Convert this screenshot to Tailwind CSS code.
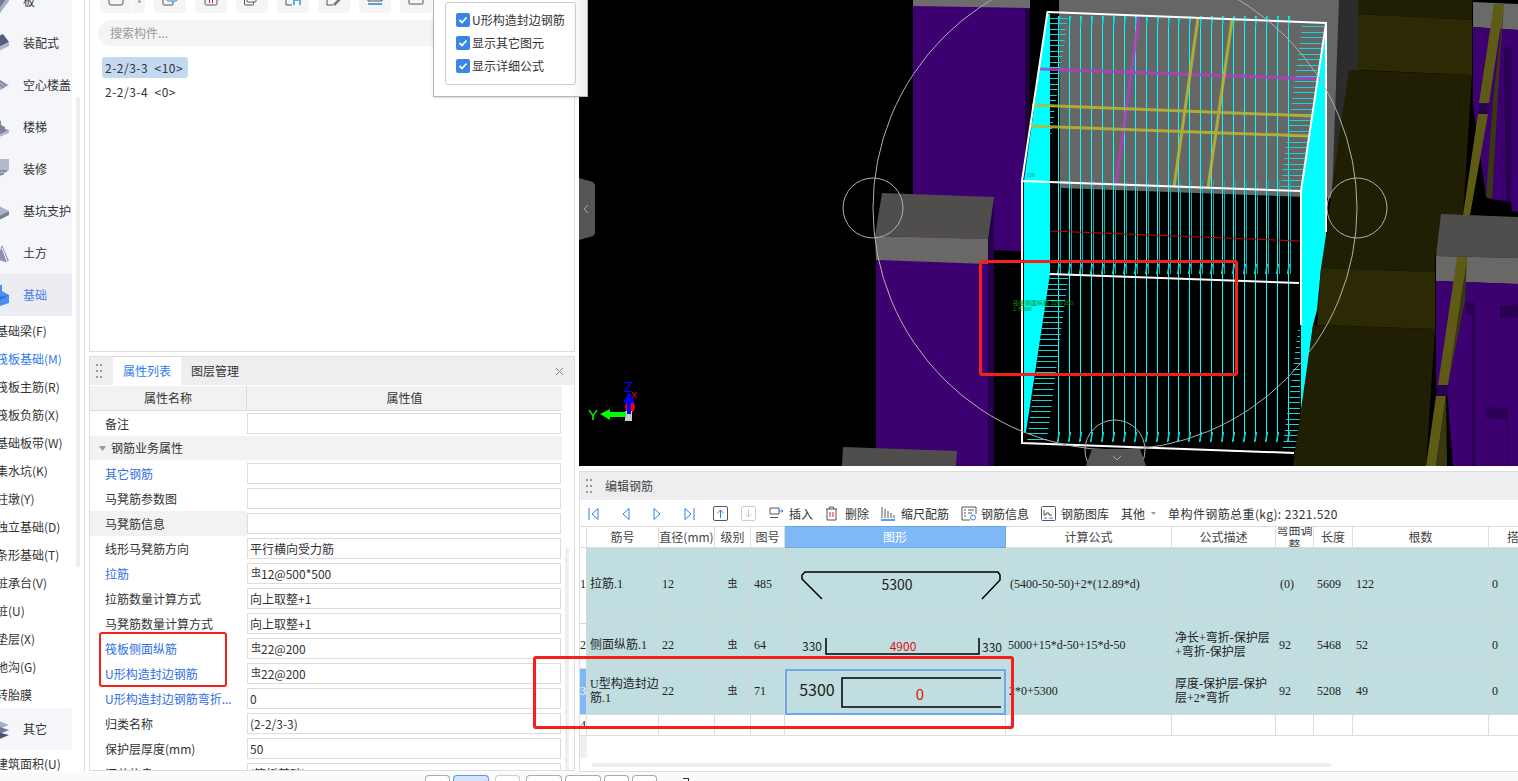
<!DOCTYPE html>
<html lang="zh-CN">
<head>
    <meta charset="UTF-8">
    <meta name="viewport" content="width=device-width, initial-scale=1.0">
    <title>编辑钢筋</title>
    <script src="https://cdn.jsdelivr.net/npm/@tailwindcss/browser@4"></script>
</head>
<body class="bg-white">
<div class="relative h-[781px] w-[1518px] overflow-hidden bg-white font-['Noto_Sans_CJK_SC',sans-serif] text-xs text-[#333]">
    <div class="flex h-[772px]">

        <!-- sidebar -->
        <aside class="relative h-[771px] w-[85px] shrink-0 overflow-hidden border-r border-[#ddd]">
            <div class="absolute left-[76px] top-[97px] h-[470px] w-1 rounded bg-[#eee]"></div>
            <div class="-mt-[20px] w-[72px]">
                <div class="flex h-[42px] items-center bg-[#f5f6fa]"><svg class="-ml-[15px] h-6 w-6" viewBox="0 0 24 24"><path d="M15 0 24 6 15 24Z" fill="#6f7a96"/><path d="M15 18 24 6V12L15 24Z" fill="#a9b0c4"/></svg><span class="ml-[14px]">板</span></div>
                <div class="flex h-[42px] items-center bg-[#f5f6fa]"><svg class="-ml-[15px] h-6 w-6" viewBox="0 0 24 24"><path d="M12 6 18 3 24 11 12 17Z" fill="#565f79"/><path d="M12 17 24 11V15L12 21Z" fill="#b0b6c8"/></svg><span class="ml-[14px]">装配式</span></div>
                <div class="flex h-[42px] items-center bg-[#f5f6fa]"><svg class="-ml-[15px] h-6 w-6" viewBox="0 0 24 24"><path d="M12 5 24 12 12 19Z" fill="#a6adc1"/><path d="M15 8 21 13M15 12 19 15" stroke="#5f6880"/></svg><span class="ml-[14px]">空心楼盖</span></div>
                <div class="flex h-[42px] items-center bg-[#f5f6fa]"><svg class="-ml-[15px] h-6 w-6" viewBox="0 0 24 24"><path d="M12 4 16 6V10L20 12V14L24 15 12 21Z" fill="#7a849e"/><path d="M12 21 24 15V18L12 23Z" fill="#b0b6c8"/></svg><span class="ml-[14px]">楼梯</span></div>
                <div class="flex h-[42px] items-center bg-[#f5f6fa]"><svg class="-ml-[15px] h-6 w-6" viewBox="0 0 24 24"><path d="M12 2H24V13L12 22Z" fill="#b4bacb"/><path d="M15 14H22M15 17H19" stroke="#5f6880"/></svg><span class="ml-[14px]">装修</span></div>
                <div class="flex h-[42px] items-center bg-[#f5f6fa]"><svg class="-ml-[15px] h-6 w-6" viewBox="0 0 24 24"><path d="M12 6 24 12 12 18Z" fill="#aab1c5"/><path d="M12 18 24 12V16L12 22Z" fill="#737d98"/></svg><span class="ml-[14px]">基坑支护</span></div>
                <div class="flex h-[42px] items-center bg-[#f5f6fa]"><svg class="-ml-[15px] h-6 w-6" viewBox="0 0 24 24"><path d="M12 18 17 4 24 20 20 21Z" fill="#8c94ab"/><path d="M17 7 22 20" stroke="#fff"/></svg><span class="ml-[14px]">土方</span></div>
                <div class="flex h-[42px] items-center bg-[#ecedf2]"><svg class="-ml-[15px] h-6 w-6" viewBox="0 0 24 24"><path d="M14 2h3v6l7 4v8l-9 3-4-4V10l3-2Z" fill="#4a90ee"/><path d="M15 14 24 12 15 17Z" fill="#2f6fcf"/></svg><span class="ml-[14px] text-[#4a7fe8]">基础</span></div>
            </div>
            <ul class="-ml-[4px] mt-px w-[90px]">
                <li class="flex h-7 items-center">基础梁(F)</li>
                <li class="flex h-7 items-center text-[#2f7dec]">筏板基础(M)</li>
                <li class="flex h-7 items-center">筏板主筋(R)</li>
                <li class="flex h-7 items-center">筏板负筋(X)</li>
                <li class="flex h-7 items-center">基础板带(W)</li>
                <li class="flex h-7 items-center">集水坑(K)</li>
                <li class="flex h-7 items-center">柱墩(Y)</li>
                <li class="flex h-7 items-center">独立基础(D)</li>
                <li class="flex h-7 items-center">条形基础(T)</li>
                <li class="flex h-7 items-center">桩承台(V)</li>
                <li class="flex h-7 items-center">桩(U)</li>
                <li class="flex h-7 items-center">垫层(X)</li>
                <li class="flex h-7 items-center">地沟(G)</li>
                <li class="flex h-7 items-center">转胎膜</li>
            </ul>
            <div class="-mt-px flex h-[42px] w-[72px] items-center bg-[#f5f6fa]"><svg class="-ml-[15px] h-6 w-6" viewBox="0 0 24 24"><path d="M12 3 24 8 12 13Z" fill="#a9b0c4"/><path d="M12 9 24 13 12 18Z" fill="#6f7a96"/><path d="M12 15 24 18 12 23Z" fill="#49536f"/></svg><span class="ml-[14px]">其它</span></div>
            <div class="-ml-[4px] flex h-7 items-center">建筑面积(U)</div>
        </aside>

        <!-- component + property panels -->
        <div class="ml-1 flex h-[771px] w-[486px] shrink-0 flex-col gap-[4px]">
            <section class="h-[352px] shrink-0 overflow-hidden border-x border-b border-[#ddd]">
                <div class="-mt-[17px] ml-[10px] flex gap-[9px]">
                    <div class="flex gap-px">
                        <div class="flex h-[30px] w-8 items-center justify-center rounded-l bg-[#f5f5f5]"><svg class="h-4 w-4" viewBox="0 0 16 16"><rect x="1" y="1" width="14" height="14" rx="2" fill="none" stroke="#555"/></svg></div>
                        <div class="flex h-[30px] w-3 items-end justify-center rounded-r bg-[#f5f5f5] pb-[10px]"><span class="h-[3px] w-[3px] rounded-full bg-[#aaa]"></span></div>
                    </div>
                    <div class="flex h-[30px] w-8 items-center justify-center rounded bg-[#f5f5f5]"><svg class="h-4 w-4" viewBox="0 0 16 16" fill="none"><rect x="1" y="4" width="10" height="11" rx="1" stroke="#555"/><rect x="5" y="1" width="10" height="10" rx="1" fill="#fff" stroke="#2f7dec"/></svg></div>
                    <div class="flex h-[30px] w-8 items-center justify-center rounded bg-[#f5f5f5]"><svg class="h-4 w-4" viewBox="0 0 16 16" fill="none"><rect x="2" y="2" width="12" height="13" rx="1.5" stroke="#555"/><path d="M6.5 9v4M9.500 9v4" stroke="#e02020"/></svg></div>
                    <div class="flex h-[30px] w-8 items-center justify-center rounded bg-[#f5f5f5]"><svg class="h-4 w-4" viewBox="0 0 16 16" fill="none"><rect x="0.500" y="6" width="9" height="9" rx="1" stroke="#555"/><rect x="3" y="4" width="9" height="8" rx="1" fill="#fff" stroke="#555"/><rect x="6" y="1" width="10" height="8" rx="1" fill="#fff" stroke="#2f7dec"/></svg></div>
                    <div class="flex h-[30px] w-8 items-center justify-center rounded bg-[#f5f5f5]"><svg class="h-4 w-4" viewBox="0 0 16 16" fill="none"><path d="M1 0V15H7" stroke="#555"/><rect x="8" y="8" width="8" height="7" fill="#6aa5f0"/><rect x="10" y="11" width="4" height="4" fill="#fff"/></svg></div>
                    <div class="flex h-[30px] w-8 items-center justify-center rounded bg-[#f5f5f5]"><svg class="h-4 w-4" viewBox="0 0 16 16" fill="none"><path d="M1 0V15H7" stroke="#555"/><path d="M8 15 15 8" stroke="#777" stroke-width="2.500"/></svg></div>
                    <div class="flex h-[30px] w-8 items-center justify-center rounded bg-[#f5f5f5]"><svg class="h-4 w-4" viewBox="0 0 16 16" fill="none"><path d="M1 0V11H15V0" stroke="#555"/><path d="M3 8H13" stroke="#555"/><path d="M1 14H15" stroke="#2f7dec" stroke-width="1.500"/></svg></div>
                    <div class="flex h-[30px] w-8 items-center justify-center rounded bg-[#f5f5f5]"><svg class="h-4 w-4" viewBox="0 0 16 16" fill="none"><rect x="1" y="1" width="14" height="13" rx="1" stroke="#555"/><path d="M3 7 6 10M6 7 3 10" stroke="#e02020"/><path d="M9 8.500H13" stroke="#555"/></svg></div>
                </div>
                <div class="ml-2 mt-[7px] flex h-[26px] w-[460px] items-center rounded-full bg-[#f4f4f4] pl-3 text-[#999]">搜索构件...</div>
                <div class="ml-3 mt-[11px] flex h-[21px] w-[86px] items-center rounded-[3px] bg-[#c3d9f1] pl-[3px] tracking-[0.5px]">2-2/3-3&nbsp;&nbsp;&lt;10&gt;</div>
                <div class="ml-3 mt-[3px] flex h-[21px] items-center pl-[3px] tracking-[0.5px]">2-2/3-4&nbsp;&nbsp;&lt;0&gt;</div>
            </section>

            <section class="relative min-h-0 flex-1 overflow-hidden border-x border-t border-b border-[#ddd]">
                <div class="flex h-7 items-center bg-[#eeeef0]">
                    <div class="ml-[6px] grid h-[14px] w-[6px] grid-cols-2 content-between gap-x-px">
                        <i class="h-[2px] w-[2px] bg-[#999]"></i><i class="h-[2px] w-[2px] bg-[#999]"></i><i class="h-[2px] w-[2px] bg-[#999]"></i><i class="h-[2px] w-[2px] bg-[#999]"></i><i class="h-[2px] w-[2px] bg-[#999]"></i><i class="h-[2px] w-[2px] bg-[#999]"></i>
                    </div>
                    <div class="ml-[11px] flex h-7 w-[68px] items-center justify-center bg-white text-[#2f7dec]">属性列表</div>
                    <div class="ml-[10px]">图层管理</div>
                    <svg class="ml-auto mr-[10px] h-[9px] w-[9px]" viewBox="0 0 9 9"><path d="M1 1 8 8M8 1 1 8" stroke="#888"/></svg>
                </div>
                <div class="absolute right-[5px] top-[191px] h-[230px] w-1 rounded bg-[#eee]"></div>
                <div class="mt-px w-[472px]">
                    <div class="flex h-[25px] border-b border-[#ddd] bg-[#f2f2f2]">
                        <div class="flex w-[157px] items-center justify-center border-r border-[#ddd]">属性名称</div>
                        <div class="flex flex-1 items-center justify-center">属性值</div>
                    </div>
                    <div class="flex h-[25px] items-center"><div class="w-[157px] pl-[15px]">备注</div><div class="flex h-[21px] w-[314px] items-center border border-[#ddd] pl-[2px]"></div></div>
                    <div class="flex h-[24px] items-center bg-[#f2f2f2] pl-[9px]"><svg class="h-[5px] w-[7px]" viewBox="0 0 7 5"><path d="M0 0H7L3.500 5Z" fill="#999"/></svg><span class="ml-[5px]">钢筋业务属性</span></div>
                    <div class="mt-px flex h-[25px] items-center"><div class="w-[157px] pl-[15px] text-[#2f6fe4]">其它钢筋</div><div class="flex h-[21px] w-[314px] items-center border border-[#ddd] pl-[2px]"></div></div>
                    <div class="flex h-[25px] items-center"><div class="w-[157px] pl-[15px]">马凳筋参数图</div><div class="flex h-[21px] w-[314px] items-center border border-[#ddd] pl-[2px]"></div></div>
                    <div class="flex h-[25px] items-center"><div class="flex h-[25px] w-[157px] items-center bg-[#f2f2f2] pl-[15px]">马凳筋信息</div><div class="flex h-[21px] w-[314px] items-center border border-[#ddd] pl-[2px]"></div></div>
                    <div class="flex h-[25px] items-center"><div class="w-[157px] pl-[15px]">线形马凳筋方向</div><div class="flex h-[21px] w-[314px] items-center border border-[#ddd] pl-[2px]">平行横向受力筋</div></div>
                    <div class="flex h-[25px] items-center"><div class="w-[157px] pl-[15px] text-[#2f6fe4]">拉筋</div><div class="flex h-[21px] w-[314px] items-center border border-[#ddd] pl-[3px]"><span class="-mt-[3px] text-[10px]">虫</span>12@500*500</div></div>
                    <div class="flex h-[25px] items-center"><div class="w-[157px] pl-[15px]">拉筋数量计算方式</div><div class="flex h-[21px] w-[314px] items-center border border-[#ddd] pl-[2px]">向上取整+1</div></div>
                    <div class="flex h-[25px] items-center"><div class="w-[157px] pl-[15px]">马凳筋数量计算方式</div><div class="flex h-[21px] w-[314px] items-center border border-[#ddd] pl-[2px]">向上取整+1</div></div>
                    <div class="flex h-[25px] items-center"><div class="w-[157px] pl-[15px] text-[#2f6fe4]">筏板侧面纵筋</div><div class="flex h-[21px] w-[314px] items-center border border-[#ddd] pl-[3px]"><span class="-mt-[3px] text-[10px]">虫</span>22@200</div></div>
                    <div class="flex h-[25px] items-center"><div class="w-[157px] pl-[15px] text-[#2f6fe4]">U形构造封边钢筋</div><div class="flex h-[21px] w-[314px] items-center border border-[#ddd] pl-[3px]"><span class="-mt-[3px] text-[10px]">虫</span>22@200</div></div>
                    <div class="flex h-[25px] items-center"><div class="w-[157px] whitespace-nowrap pl-[15px] text-[#2f6fe4]">U形构造封边钢筋弯折...</div><div class="flex h-[21px] w-[314px] items-center border border-[#ddd] pl-[2px]">0</div></div>
                    <div class="flex h-[25px] items-center"><div class="w-[157px] pl-[15px]">归类名称</div><div class="flex h-[21px] w-[314px] items-center border border-[#ddd] pl-[2px]">(2-2/3-3)</div></div>
                    <div class="flex h-[25px] items-center"><div class="w-[157px] pl-[15px]">保护层厚度(mm)</div><div class="flex h-[21px] w-[314px] items-center border border-[#ddd] pl-[2px]">50</div></div>
                    <div class="flex h-[25px] items-center"><div class="w-[157px] pl-[15px]">汇总信息</div><div class="flex h-[21px] w-[314px] items-center border border-[#ddd] pl-[2px]">(筏板基础)</div></div>
                </div>
            </section>
        </div>

        <!-- 3d view + rebar editor -->
        <main class="ml-1 flex w-[939px] shrink-0 flex-col">
            <div class="h-[466px] shrink-0 bg-black">
                <svg class="block" width="939" height="466" viewBox="579 0 939 466" font-family="Liberation Sans">
                    <!-- columns on the left -->
                    <polygon points="913,0 1030,0 1030,252 994,250 913,250" fill="#3d0070"/>
                    <polygon points="1025,9 1030,9 1030,252 1025,252" fill="#20003c"/>
                    <polygon points="913,0 1030,0 1030,8 913,6" fill="#6e6c6c"/>
                    <polygon points="876,260 988,263 988,466 876,466" fill="#3d0070"/>
                    <polygon points="988,240 994,197 994,466 988,466" fill="#24004a"/>
                    <polygon points="882,193 994,197 988,239 875,236" fill="#4f4e4d"/>
                    <polygon points="875,236 988,239 988,264 876,260" fill="#696867"/>
                    <polygon points="843,447 957,451 956,466 842,466" fill="#4f4e4d"/>
                    <!-- plate behind the cube -->
                    <polygon points="1059,0 1339,0 1339,138 1332,198 1060,188" fill="#666"/>
                    <polygon points="1339,0 1360,0 1360,70 1340,198 1332,198" fill="#2c2c2c"/>
                    <!-- olive bands -->
                    <polygon points="1359,0 1472,0 1472,20 1358,14" fill="#201f03"/>
                    <polygon points="1358,14 1472,20 1472,75 1358,70" fill="#2b2a04"/>
                    <polygon points="1349,70 1472,75 1463,215 1435,255 1435,272 1321,268 1339,138" fill="#201f03"/>
                    <!-- cyan faces -->
                    <polygon points="1047,14 1050,14 1050,274 1026,432 1024,432 1024,181" fill="#0ff"/>
                    <polygon points="1326,28 1326,235 1321,268 1317,310 1313,325 1301,420 1301,192" fill="#0ff"/>
                    <!-- rebar -->
                    <path id="rebarTop" fill="none" stroke="#0ff"/>
                    <path id="rebarLow" fill="none" stroke="#0ff"/>
                    <path id="rebarLowTwin" fill="none" stroke="#14a8a8"/>
                    <path id="rebarHooks" fill="none" stroke="#00d8d8" stroke-width="1.500"/>
                    <path id="ladders" fill="none" stroke="#14d4d8"/>
                    <!-- colored bars -->
                    <g fill="none" stroke-width="3" stroke-opacity="0.850">
                        <path d="M1040 69 1320 79M1139 16 1116 184" stroke="#b040c0"/>
                        <path d="M1032 105 1312 116M1030 126 1309 136M1198 18 1174 187M1232 20 1208 188" stroke="#b8b830"/>
                    </g>
                    <path d="M1050 231 1300 241" stroke="#d00000"/>
                    <!-- olive below, over the cube -->
                    <polygon points="1321,268 1435,272 1435,329 1317,325" fill="#2b2a04"/>
                    <polygon points="1313,325 1435,329 1426,466 1293,466" fill="#201f03"/>
                    <!-- wire frame -->
                    <g fill="none" stroke="#fff" stroke-width="2">
                        <path d="M1047.500 12 1326 23 1301 191 1022 181Z"/>
                        <path d="M1022 181V443L1294 453M1301 191V325M1326 23V232M1050 274 1299 283"/>
                    </g>
                    <!-- right hand columns -->
                    <polygon points="1473,2 1518,4 1518,30 1473,27" fill="#6a6a6a"/>
                    <polygon points="1473,27 1518,30 1518,212 1512,211 1511,202 1491,199 1486,197 1473,105" fill="#3d0070"/>
                    <polygon points="1504,47 1512,48 1511,202 1506,201" fill="#2a0050"/>
                    <polygon points="1504,4 1493,100 1486,197 1492,199 1500,60" fill="#3a3810"/>
                    <polygon points="1494,4 1504,4 1489,103 1479,103" fill="#5e5c14"/>
                    <polygon points="1479,103 1489,105 1488,114 1478,114" fill="#2a0050"/>
                    <polygon points="1478,114 1488,114 1470,215 1463,215" fill="#5e5c14"/>
                    <polygon points="1441,214 1518,217 1518,258 1436,256" fill="#4f4e4d"/>
                    <polygon points="1436,256 1518,258 1518,284 1436,281" fill="#696867"/>
                    <polygon points="1436,281 1518,284 1518,466 1453,466 1447,390 1436,388" fill="#3d0070"/>
                    <polygon points="1466,302 1475,303 1475,466 1472,466 1472,315 1466,315" fill="#2a0050"/>
                    <polygon points="1500,306 1518,304 1518,317 1500,318" fill="#2a0050"/>
                    <polygon points="1486,407 1508,409 1508,466 1507,466 1507,420 1485,417" fill="#2a0050"/>
                    <polygon points="1467,257 1465,300 1447,390 1448,385" fill="#3a3810"/>
                    <polygon points="1457,257 1467,257 1448,385 1438,385" fill="#5e5c14"/>
                    <polygon points="1438,385 1448,385 1447,396 1436,396" fill="#2a0050"/>
                    <polygon points="1436,396 1446,396 1436,466 1426,466" fill="#5e5c14"/>
                    <polygon points="1446,396 1447,466 1436,466" fill="#3a3810"/>
                    <!-- gizmo circles -->
                    <g fill="none" stroke="#b0b0b0">
                        <circle cx="1115" cy="208" r="242"/>
                        <circle cx="873" cy="208" r="30"/>
                        <circle cx="1357" cy="208" r="30"/>
                        <circle cx="1115" cy="450" r="30"/>
                    </g>
                    <polygon points="1092,449 1140,449 1146,466 1086,466" fill="#555"/>
                    <path d="M1113 456 1117 460 1121 456" fill="none" stroke="#aaa"/>
                    <polygon points="579,178 593,182 595,185 595,234 593,236 579,240" fill="#555"/>
                    <path d="M588 205 584 209 588 213" fill="none" stroke="#aaa"/>
                    <!-- model labels -->
                    <text x="1013" y="305" font-size="6" fill="#0a8a0a">筏板侧面纵筋 22@200</text>
                    <text x="1013" y="311" font-size="6" fill="#0a8a0a">1-5300</text>
                    <text x="1027" y="177" font-size="5" fill="#14a870">ID8</text>
                    <!-- axis -->
                    <ellipse cx="630" cy="407" rx="5" ry="6" fill="#f00"/>
                    <text x="631" y="398" font-size="9" fill="#f00">X</text>
                    <rect x="625" y="411" width="7" height="10" fill="#ccc"/>
                    <path d="M600 415 610 410V413H626V418H610V421Z" fill="#0f0" transform="translate(0 -1)"/>
                    <path d="M629 392 635 403H631V414H627V403H623Z" fill="#00f"/>
                    <text x="624" y="392" font-size="15" fill="#00f">Z</text>
                    <text x="588" y="420" font-size="15" fill="#0f0">Y</text>
                </svg>
            </div>

            <section class="mt-[5px] flex min-h-0 flex-1 flex-col border-l border-t border-b border-[#ddd]">
                <div class="flex h-7 shrink-0 items-center bg-[#eeeef0]">
                    <div class="ml-[6px] grid h-[14px] w-[6px] grid-cols-2 content-between gap-x-px">
                        <i class="h-[2px] w-[2px] bg-[#999]"></i><i class="h-[2px] w-[2px] bg-[#999]"></i><i class="h-[2px] w-[2px] bg-[#999]"></i><i class="h-[2px] w-[2px] bg-[#999]"></i><i class="h-[2px] w-[2px] bg-[#999]"></i><i class="h-[2px] w-[2px] bg-[#999]"></i>
                    </div>
                    <span class="ml-[13px] text-[#444]">编辑钢筋</span>
                </div>
                <div class="flex h-[27px] shrink-0 items-center whitespace-nowrap pl-2">
                    <svg class="h-[14px] w-[11px]" viewBox="0 0 11 14" fill="none" stroke="#2f7dec"><path d="M1 1V13M10 1.500 4 7 10 12.500Z"/></svg>
                    <svg class="ml-[23px] h-[14px] w-2" viewBox="0 0 8 14" fill="none" stroke="#2f7dec"><path d="M7 1.500 1 7 7 12.500Z"/></svg>
                    <svg class="ml-[23px] h-[14px] w-2" viewBox="0 0 8 14" fill="none" stroke="#2f7dec"><path d="M1 1.500 7 7 1 12.500Z"/></svg>
                    <svg class="ml-[23px] h-[14px] w-[11px]" viewBox="0 0 11 14" fill="none" stroke="#2f7dec"><path d="M10 1V13M1 1.500 7 7 1 12.500Z"/></svg>
                    <svg class="ml-[18px] h-[15px] w-[15px]" viewBox="0 0 15 15" fill="none"><rect x="0.500" y="0.500" width="14" height="14" rx="1.500" stroke="#555"/><path d="M7.500 12V4M4.500 7 7.500 4 10.500 7" stroke="#2f7dec"/></svg>
                    <svg class="ml-[13px] h-[15px] w-[15px]" viewBox="0 0 15 15" fill="none"><rect x="0.500" y="0.500" width="14" height="14" rx="1.500" stroke="#ccc"/><path d="M7.500 3V11M4.500 8 7.500 11 10.500 8" stroke="#ccc"/></svg>
                    <svg class="ml-[13px] h-[14px] w-[15px]" viewBox="0 0 15 14" fill="none" stroke="#555"><path d="M1 1H10V7H1ZM1 10.500H9"/><path d="M10 4H14M12.500 2.500 14 4 12.500 5.500" stroke="#2f7dec"/></svg>
                    <span class="ml-[5px]">插入</span>
                    <svg class="ml-3 h-[15px] w-[13px]" viewBox="0 0 13 15" fill="none" stroke="#555"><path d="M1 3H12M4.500 3V1H8.500V3M2 3V14H11V3"/><path d="M5 6V11M8 6V11" stroke="#e02020"/></svg>
                    <span class="ml-[7px]">删除</span>
                    <svg class="ml-3 h-[15px] w-[14px]" viewBox="0 0 14 15" fill="none" stroke="#555"><path d="M1 1V12M4 3V12M7 5V12M10 7V12M13 9V12"/><path d="M0 14H14" stroke="#2f7dec" stroke-width="1.500"/></svg>
                    <span class="ml-[6px]">缩尺配筋</span>
                    <svg class="ml-3 h-[15px] w-4" viewBox="0 0 16 15" fill="none" stroke="#555"><path d="M9 14H1V1H15V8M3 4H5M7 4H13M3 7H5M7 7H11M3 10H5"/><circle cx="12" cy="11.500" r="2.500" stroke="#2f7dec"/></svg>
                    <span class="ml-1">钢筋信息</span>
                    <svg class="ml-3 h-[15px] w-[15px]" viewBox="0 0 15 15" fill="none" stroke="#555"><rect x="0.500" y="0.500" width="14" height="14" rx="1"/><path d="M3 4V9H5V7H8V9H11"/><path d="M3 12H6M8 12H12" stroke="#2f7dec"/></svg>
                    <span class="ml-[5px]">钢筋图库</span>
                    <span class="ml-3">其他</span>
                    <svg class="ml-[6px] h-[3px] w-[5px]" viewBox="0 0 5 3"><path d="M0 0H5L2.500 3Z" fill="#999"/></svg>
                    <span class="ml-3 tracking-[0.4px]">单构件钢筋总重(kg):&nbsp;2321.520</span>
                </div>
                <div class="-mt-px min-h-0 flex-1 overflow-hidden">
                    <table class="w-[969px] table-fixed border-separate border-spacing-0 font-['Liberation_Serif','Noto_Sans_CJK_SC',serif] text-xs text-[#222]">
                        <colgroup>
                            <col class="w-[7px]"><col class="w-[72px]"><col class="w-[56px]"><col class="w-[36px]"><col class="w-[34px]"><col class="w-[221px]"><col class="w-[166px]"><col class="w-[104px]"><col class="w-[38px]"><col class="w-[39px]"><col class="w-[136px]"><col class="w-[60px]">
                        </colgroup>
                        <thead class="font-['Noto_Sans_CJK_SC',sans-serif] font-normal text-[#444]">
                            <tr class="h-[22px]">
                                <th class="border-y border-r border-[#ddd] p-0 font-normal"></th>
                                <th class="border-y border-r border-[#ddd] p-0 font-normal">筋号</th>
                                <th class="border-y border-r border-[#ddd] p-0 font-normal">直径(mm)</th>
                                <th class="border-y border-r border-[#ddd] p-0 font-normal">级别</th>
                                <th class="border-y border-r border-[#ddd] p-0 font-normal">图号</th>
                                <th class="border-y border-r border-[#6ea8e8] bg-[#7eb8f7] p-0 font-normal text-white">图形</th>
                                <th class="border-y border-r border-[#ddd] p-0 font-normal">计算公式</th>
                                <th class="border-y border-r border-[#ddd] p-0 font-normal">公式描述</th>
                                <th class="border-y border-r border-[#ddd] p-0 font-normal"><div class="flex h-5 items-center justify-center overflow-hidden leading-[15px]">弯曲调整</div></th>
                                <th class="border-y border-r border-[#ddd] p-0 font-normal">长度</th>
                                <th class="border-y border-r border-[#ddd] p-0 font-normal">根数</th>
                                <th class="border-y border-[#ddd] p-0 text-center font-normal">搭接</th>
                            </tr>
                        </thead>
                        <tbody>
                            <tr class="h-[76px] bg-[#c0dee0] [&>td:not(:has(svg))]:pb-[3px]">
                                <td class="overflow-hidden border-r border-b border-[#d5d9da] bg-white p-0 text-center">1</td>
                                <td class="border-r border-b border-[#d5d9da] px-[3px]">拉筋.1</td>
                                <td class="border-r border-b border-[#d5d9da] px-[3px]">12</td>
                                <td class="border-r border-b border-[#d5d9da] text-center text-[10px]">虫</td>
                                <td class="border-r border-b border-[#d5d9da] px-[3px]">485</td>
                                <td class="border-r border-b border-[#d5d9da] p-0">
                                    <svg class="block" width="220" height="75" viewBox="785 548 220 75" font-family="Noto Sans CJK SC">
                                        <path d="M822 599 802 579 802 575 805 572H998L1000 575V580L982 599" fill="none" stroke="#000" stroke-width="1.500"/>
                                        <text x="897" y="590" font-size="14" text-anchor="middle" fill="#222">5300</text>
                                    </svg>
                                </td>
                                <td class="border-r border-b border-[#d5d9da] px-[4px]">(5400-50-50)+2*(12.89*d)</td>
                                <td class="border-r border-b border-[#d5d9da] px-[3px]"></td>
                                <td class="border-r border-b border-[#d5d9da] px-[4px]">(0)</td>
                                <td class="border-r border-b border-[#d5d9da] px-[3px]">5609</td>
                                <td class="border-r border-b border-[#d5d9da] px-[3px]">122</td>
                                <td class="border-b border-[#d5d9da] px-[3px]">0</td>
                            </tr>
                            <tr class="h-[45px] bg-[#c0dee0] [&>td:not(:has(svg))]:pb-[2px]">
                                <td class="overflow-hidden border-r border-b border-[#d5d9da] bg-white p-0 text-center">2</td>
                                <td class="border-r border-b border-[#d5d9da] px-[3px] whitespace-nowrap">侧面纵筋.1</td>
                                <td class="border-r border-b border-[#d5d9da] px-[3px]">22</td>
                                <td class="border-r border-b border-[#d5d9da] text-center text-[10px]">虫</td>
                                <td class="border-r border-b border-[#d5d9da] px-[3px]">64</td>
                                <td class="border-r border-b border-[#d5d9da] p-0">
                                    <svg class="block" width="220" height="44" viewBox="785 624 220 44" font-family="Noto Sans CJK SC">
                                        <path d="M826 638V654H979V638" fill="none" stroke="#000" stroke-width="1.500"/>
                                        <text x="812" y="651" font-size="12" text-anchor="middle" fill="#222">330</text>
                                        <text x="903" y="651" font-size="12" text-anchor="middle" fill="#e01010">4900</text>
                                        <text x="992" y="652" font-size="12" text-anchor="middle" fill="#222">330</text>
                                    </svg>
                                </td>
                                <td class="border-r border-b border-[#d5d9da] px-[2px] whitespace-nowrap">5000+15*d-50+15*d-50</td>
                                <td class="border-r border-b border-[#d5d9da] px-[3px] leading-[14px]">净长+弯折-保护层<br>+弯折-保护层</td>
                                <td class="border-r border-b border-[#d5d9da] px-[3px]">92</td>
                                <td class="border-r border-b border-[#d5d9da] px-[3px]">5468</td>
                                <td class="border-r border-b border-[#d5d9da] px-[3px]">52</td>
                                <td class="border-b border-[#d5d9da] px-[3px]">0</td>
                            </tr>
                            <tr class="h-[46px] bg-[#c0dee0] [&>td:not(:has(svg))]:pb-[2px]">
                                <td class="overflow-hidden border-r border-b border-[#d5d9da] bg-[#7eb8f7] p-0 text-center text-white">3</td>
                                <td class="border-r border-b border-[#d5d9da] px-[3px] leading-[14px] whitespace-nowrap">U型构造封边<br>筋.1</td>
                                <td class="border-r border-b border-[#d5d9da] px-[3px]">22</td>
                                <td class="border-r border-b border-[#d5d9da] text-center text-[10px]">虫</td>
                                <td class="border-r border-b border-[#d5d9da] px-[3px]">71</td>
                                <td class="border-r border-b border-[#d5d9da] p-0 outline-2 -outline-offset-2 outline-[#6ea8e8]">
                                    <svg class="block" width="220" height="45" viewBox="785 669 220 45" font-family="Noto Sans CJK SC">
                                        <path d="M1001 678H842V707H1001" fill="none" stroke="#000" stroke-width="1.500"/>
                                        <text x="817" y="696" font-size="16" text-anchor="middle" fill="#222">5300</text>
                                        <text x="920" y="700" font-size="15" text-anchor="middle" fill="#e01010">0</text>
                                    </svg>
                                </td>
                                <td class="border-r border-b border-[#d5d9da] px-[3px]">2*0+5300</td>
                                <td class="border-r border-b border-[#d5d9da] px-[3px] leading-[14px]">厚度-保护层-保护<br>层+2*弯折</td>
                                <td class="border-r border-b border-[#d5d9da] px-[3px]">92</td>
                                <td class="border-r border-b border-[#d5d9da] px-[3px]">5208</td>
                                <td class="border-r border-b border-[#d5d9da] px-[3px]">49</td>
                                <td class="border-b border-[#d5d9da] px-[3px]">0</td>
                            </tr>
                            <tr class="h-[21px]">
                                <td class="overflow-hidden border-r border-b border-[#ddd] p-0 text-center">4</td>
                                <td class="border-r border-b border-[#ddd]"></td>
                                <td class="border-r border-b border-[#ddd]"></td>
                                <td class="border-r border-b border-[#ddd]"></td>
                                <td class="border-r border-b border-[#ddd]"></td>
                                <td class="border-r border-b border-[#ddd]"></td>
                                <td class="border-r border-b border-[#ddd]"></td>
                                <td class="border-r border-b border-[#ddd]"></td>
                                <td class="border-r border-b border-[#ddd]"></td>
                                <td class="border-r border-b border-[#ddd]"></td>
                                <td class="border-r border-b border-[#ddd]"></td>
                                <td class="border-b border-[#ddd]"></td>
                            </tr>
                        </tbody>
                    </table>
                    <div class="h-[22px] w-[7px] bg-[#f0f0f0]"></div>
                    <div class="ml-3 mt-[5px] h-1 w-[739px] rounded bg-[#eee]"></div>
                </div>
            </section>
        </main>
    </div>

    <!-- bottom strip -->
    <div class="flex h-[9px] items-end bg-[#fafafa] pl-[425px]">
        <div class="h-[6px] w-[25px] rounded-t border border-b-0 border-[#aaa] bg-white"></div>
        <div class="ml-[3px] h-[6px] w-9 rounded-t border border-b-0 border-[#5b9bea] bg-[#d3e4fa]"></div>
        <div class="ml-[6px] h-[6px] w-[25px] rounded-t border border-b-0 border-[#ccc] bg-white"></div>
        <div class="ml-[6px] h-[6px] w-9 rounded-t border border-b-0 border-[#aaa] bg-white"></div>
        <div class="ml-[3px] h-[6px] w-9 rounded-t border border-b-0 border-[#aaa] bg-white"></div>
        <div class="ml-[3px] h-[6px] w-[25px] rounded-t border border-b-0 border-[#aaa] bg-white"></div>
        <div class="ml-[3px] h-[6px] w-[25px] rounded-t border border-b-0 border-[#aaa] bg-white"></div>
        <div class="ml-[26px] h-[3px] w-[6px] border-t border-r border-[#333]"></div>
    </div>

    <!-- check options popup -->
    <div class="absolute left-[433px] top-0 h-[97px] w-[155px] border border-t-0 border-[#b5b5b5] bg-linear-to-r from-white from-[90%] to-[#eee] shadow-sm">
        <div class="ml-[11px] mt-[2px] flex h-[83px] w-[131px] flex-col gap-[9px] rounded-[3px] border border-[#ccc] pl-[10px] pt-[10px]">
            <label class="flex h-[14px] items-center gap-[2px]"><span class="flex h-[14px] w-[14px] items-center justify-center rounded-[2px] bg-[#3a86e6]"><svg class="h-[10px] w-[10px]" viewBox="0 0 10 10" fill="none"><path d="M1.500 5 4 7.500 8.500 2.500" stroke="#fff" stroke-width="1.800"/></svg></span>U形构造封边钢筋</label>
            <label class="flex h-[14px] items-center gap-[2px]"><span class="flex h-[14px] w-[14px] items-center justify-center rounded-[2px] bg-[#3a86e6]"><svg class="h-[10px] w-[10px]" viewBox="0 0 10 10" fill="none"><path d="M1.500 5 4 7.500 8.500 2.500" stroke="#fff" stroke-width="1.800"/></svg></span>显示其它图元</label>
            <label class="flex h-[14px] items-center gap-[2px]"><span class="flex h-[14px] w-[14px] items-center justify-center rounded-[2px] bg-[#3a86e6]"><svg class="h-[10px] w-[10px]" viewBox="0 0 10 10" fill="none"><path d="M1.500 5 4 7.500 8.500 2.500" stroke="#fff" stroke-width="1.800"/></svg></span>显示详细公式</label>
        </div>
    </div>

    <!-- red markup drawn over the screenshot -->
    <div class="absolute left-[99px] top-[632px] h-[55px] w-[128px] rounded-[3px] border-2 border-[#f5201a]"></div>
    <div class="absolute left-[533px] top-[656px] h-[73px] w-[481px] rounded-[3px] border-[3px] border-[#f5201a]"></div>
    <div class="absolute left-[979px] top-[260px] h-[116px] w-[259px] rounded-[3px] border-[3px] border-[#f5201a]"></div>
</div>

<script>
    // rebar lines of the 3d view: same spacing everywhere, so build them in a loop
    const barXs = [];
    for (let i = 0; i < 22; i++) barXs.push(Math.round(1058 + i * 10.95) + 0.5);

    let topBars = '', lowBars = '', twinBars = '', hooks = '', ladders = '';
    barXs.forEach(x => {
        topBars += `M${x} 16V181`;
        lowBars += `M${x} 181V441`;
        twinBars += `M${x + 2} 181V274`;
        hooks += `M${x - 1} 442L${x + 1} 432M${x + 1} 16L${x} 26M${x - 1} 274L${x + 1} 264`;
    });

    // horizontal distribution bars along the side faces
    for (let y = 17.5; y < 135; y += 5.5) {
        const t = (y - 17) / 118;
        ladders += `M${1050 - t} ${Math.round(y) + 0.5}H${1068 - t * 17}`;
    }
    for (let y = 26; y < 190; y += 5.5) {
        const r = 1324 - (y - 26) * 22 / 164;
        ladders += `M${r} ${Math.round(y) + 0.5}H${r - 22}`;
    }
    for (let y = 278; y < 442; y += 5.55) {
        const l = 1048 - (y - 278) * 21 / 162;
        ladders += `M${l} ${Math.round(y) + 0.5}h20`;
    }
    for (let y = 330; y < 452; y += 5.55) {
        const l = 1298 - (y - 330) * 16 / 122;
        ladders += `M${l} ${Math.round(y) + 0.5}H1300`;
    }

    document.getElementById('rebarTop').setAttribute('d', topBars);
    document.getElementById('rebarLow').setAttribute('d', lowBars);
    document.getElementById('rebarLowTwin').setAttribute('d', twinBars);
    document.getElementById('rebarHooks').setAttribute('d', hooks);
    document.getElementById('ladders').setAttribute('d', ladders);
</script>
</body>
</html>
